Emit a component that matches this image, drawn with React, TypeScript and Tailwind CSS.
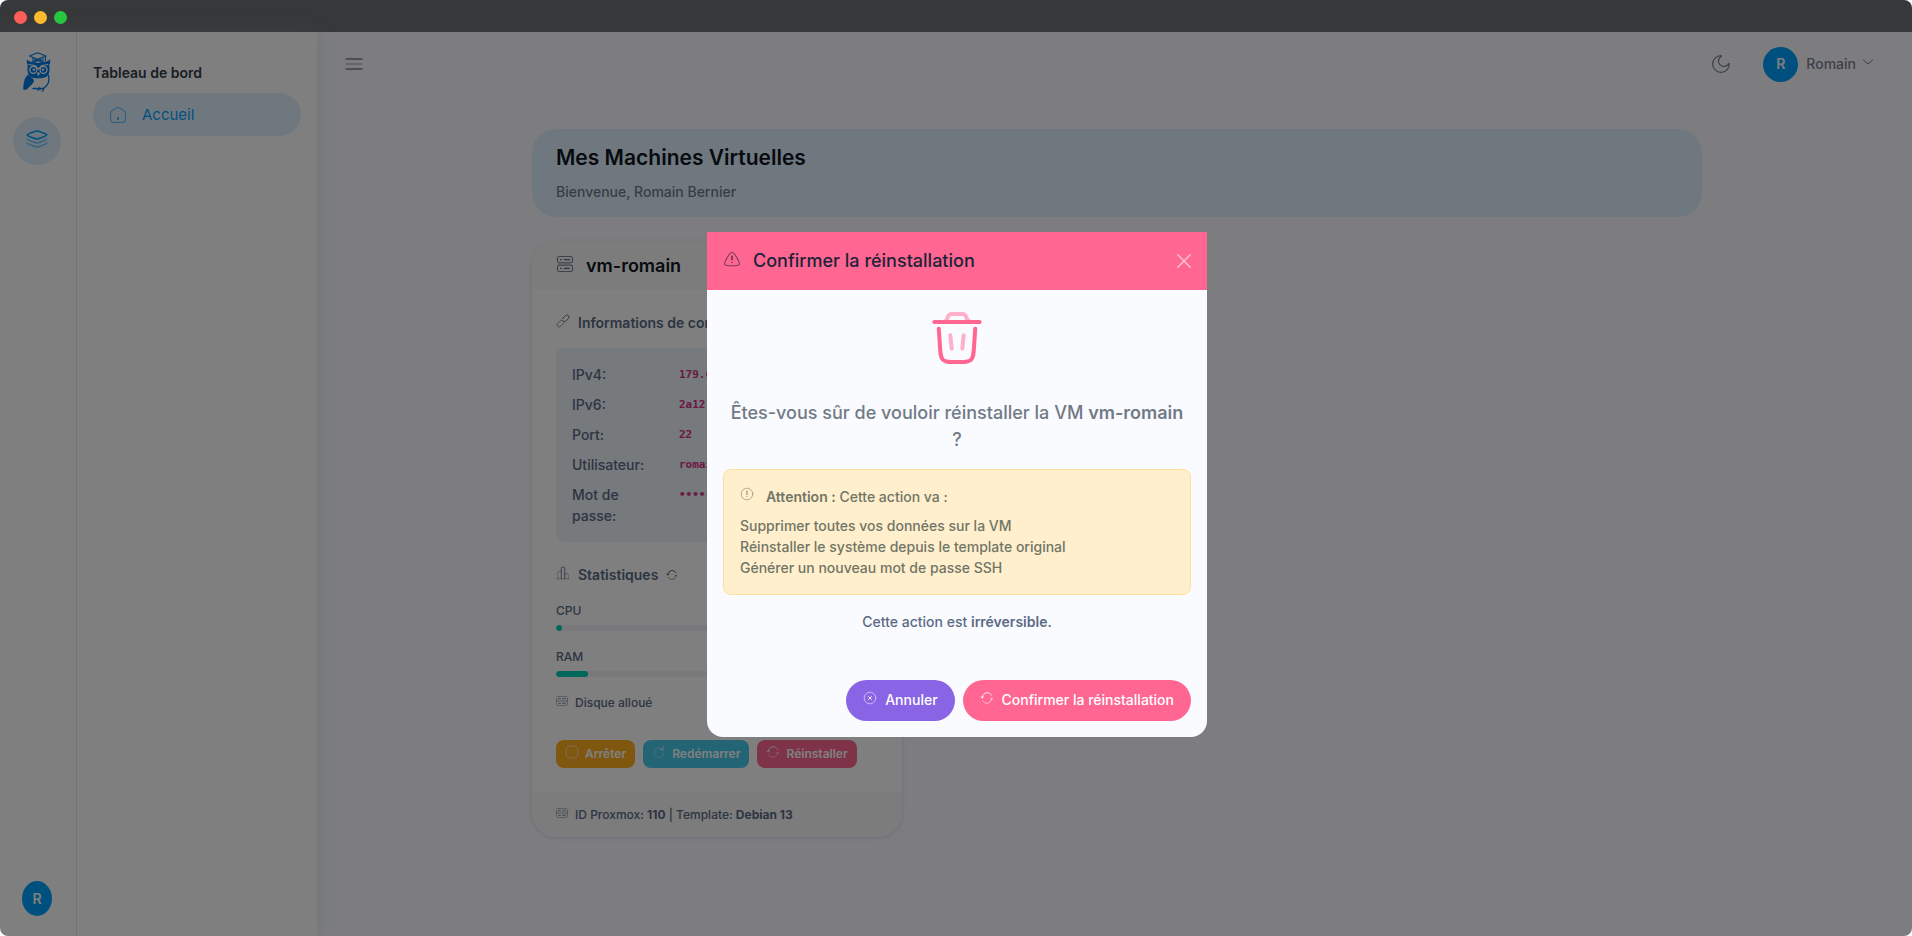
import type { ReactNode } from "react";
import clsx from "clsx";

type IconProps = {
    size?: number;
    className?: string;
    children?: ReactNode;
}

function Icon({ size = 14, className, children }: IconProps) {
    return (
        <svg
            width={size}
            height={size}
            viewBox="0 0 24 24"
            fill="none"
            stroke="currentColor"
            strokeWidth="1.5"
            strokeLinecap="round"
            aria-hidden="true"
            className={clsx("shrink-0", className)}
        >
            {children}
        </svg>
    );
}

function OwlLogo() {
    return (
        <svg width="28" height="40" viewBox="0 0 28 40" fill="#007be4" aria-hidden="true">
            <path d="m6.500 4 8-3.200 8.500 3.200-8.500 3.200Z" fill="none" stroke="#007be4" strokeWidth="1.200" strokeLinejoin="round" />
            <path d="M10 5.500v4.300m10-4.300v4.300m2.500-5.500v5M10 9.500c1.500-1.200 3-1.500 5-1.500s3.500.3 5 1.500M11.500 7l7 3m0-3-7 3" fill="none" stroke="#007be4" strokeWidth="1.100" />
            <path d="M4 7.500c1.500 2 3.500 2.500 6 2.300L15 11l5-1.200c2.500.2 4.700-.3 7-2.300.5 2.500.2 4-.8 5.700 1 5 0 9-2.400 11.200-4 2.600-13 2.600-17.200 0C4.300 21 4 17 4.800 13.200 4 11.500 3.500 9.800 4 7.500Z" />
            <circle cx="10.300" cy="17.800" r="3.500" fill="none" stroke="#fff" strokeWidth="1.300" />
            <circle cx="20.500" cy="17.800" r="3.500" fill="none" stroke="#fff" strokeWidth="1.300" />
            <circle cx="10.800" cy="17.600" r="1.200" fill="#fff" />
            <circle cx="20" cy="17.600" r="1.200" fill="#fff" />
            <path d="m5.500 12.500 6.500 1 3.400 3.500 3.400-3.500 6.500-1" fill="none" stroke="#fff" strokeWidth="1.100" />
            <path d="m13.700 20.500 1.700 4 1.700-4Z" fill="#fff" />
            <path d="M5 22.500c2 3 5.500 3.500 6 6C10.500 32.500 5.500 34.500 4 37.500L.5 38C0 33 1 26 5 22.500Z" />
            <path d="M25.300 23c1.700 6-.8 11-5.300 13.500M10 36.500h4m3.500 0h3M14.500 38l1.500-2.300 1 2.300m2.500 1.200L21 36.500" fill="none" stroke="#007be4" strokeWidth="1.300" strokeLinecap="round" />
        </svg>
    );
}

function ServerIcon({ size = 18, className }: IconProps) {
    return (
        <Icon size={size} className={className}>
            <rect x="2" y="2" width="20" height="8.500" rx="2.500" opacity=".8" />
            <rect x="2" y="13.500" width="20" height="8.500" rx="2.500" opacity=".8" />
            <path d="M6 6.200h1M11 6.200h7M6 17.800h1M11 17.800h7" />
        </Icon>
    );
}

function DiskIcon() {
    return (
        <Icon size={12} className="mb-1">
            <rect x="1" y="3" width="22" height="18" rx="4" opacity=".6" />
            <path d="M1 12h22" opacity=".6" />
            <path d="M5 7.500h4m4 0h6M5 16.500h4m4 0h6" />
        </Icon>
    );
}

function RefreshIcon({ size, className }: IconProps) {
    return (
        <Icon size={size} className={className}>
            <path d="M3.700 11.500C3.800 6.800 7.500 3 12.100 3c3.100 0 5.900 1.700 7.300 4.300" />
            <path d="M1.500 10 3.700 12.200 6 10" />
            <path d="M20.300 12.500c-.1 4.700-3.900 8.500-8.500 8.500-3.100 0-5.900-1.700-7.300-4.300" opacity=".6" />
            <path d="m22.500 14-2.200-2.200L18 14" opacity=".6" />
        </Icon>
    );
}

const connection = [
    { label: "IPv4:", value: "179.60.1.10" },
    { label: "IPv6:", value: "2a12:1::10" },
    { label: "Port:", value: "22" },
    { label: "Utilisateur:", value: "romain" },
    { label: "Mot de passe:", value: "••••••••" },
];

const stats = [
    { label: "CPU", value: 2 },
    { label: "RAM", value: 10 },
];

function TitleBar() {
    return (
        <div className="flex h-8 shrink-0 items-center gap-[7px] bg-[#373839] px-[14px] pt-[2px]">
            <span className="size-[13px] rounded-full bg-[#ff5f57]" />
            <span className="size-[13px] rounded-full bg-[#febc2e]" />
            <span className="size-[13px] rounded-full bg-[#28c840]" />
        </div>
    );
}

function Sidebar() {
    return (
        <aside className="z-10 flex shrink-0 bg-white shadow-[0_0_20px_rgba(90,106,133,0.15)]">
            <div className="flex w-[77px] flex-col items-center border-r border-[#e0e4ea] pt-5 pr-[2px] pb-5">
                <OwlLogo />
                <button type="button" aria-label="Tableau de bord" className="mt-[25px] flex size-12 items-center justify-center rounded-full bg-[#e0f1ff] pb-1 text-[#00a1ff]">
                    <Icon size={24}>
                        <path d="M4.979 9.685C2.993 8.891 2 8.494 2 8s.993-.89 2.979-1.685l2.808-1.123C9.773 4.397 10.767 4 12 4s2.227.397 4.213 1.192l2.808 1.123C21.007 7.109 22 7.506 22 8s-.993.89-2.979 1.685l-2.808 1.124C14.227 11.603 13.233 12 12 12s-2.227-.397-4.213-1.191z" />
                        <path opacity=".5" d="M22 12s-.993.891-2.979 1.685l-2.808 1.124C14.227 15.603 13.233 16 12 16s-2.227-.397-4.213-1.191l-2.808-1.124C2.993 12.891 2 12 2 12" />
                        <path opacity=".5" d="M22 16s-.993.891-2.979 1.685l-2.808 1.124C14.227 19.603 13.233 20 12 20s-2.227-.397-4.213-1.191l-2.808-1.124C2.993 16.891 2 16 2 16" />
                    </Icon>
                </button>
                <span className="mt-auto flex h-[35px] w-[30px] items-center justify-center rounded-[50%] bg-[#00a1ff] text-sm font-semibold text-white">R</span>
            </div>
            <nav className="w-60 px-4 pt-[30px]">
                <h2 className="text-sm leading-[21px] font-semibold text-[#343c48]">Tableau de bord</h2>
                <a href="#" className="mt-[10px] flex h-[43px] items-center gap-[15px] rounded-full bg-[#e0f1ff] px-4 pt-px text-[15px] font-normal text-[#00a1ff]">
                    <Icon size={18}>
                        <path opacity=".6" d="M2 12.204c0-2.289 0-3.433.52-4.381c.518-.949 1.467-1.537 3.364-2.715l2-1.241C9.889 2.622 10.892 2 12 2s2.110.622 4.116 1.867l2 1.241c1.897 1.178 2.846 1.766 3.365 2.715S22 9.915 22 12.203v1.522c0 3.900 0 5.851-1.172 7.063S17.771 22 14 22h-4c-3.771 0-5.657 0-6.828-1.212S2 17.626 2 13.725z" />
                        <path d="M12 15.500v2" strokeWidth="2" />
                    </Icon>
                    Accueil
                </a>
            </nav>
        </aside>
    );
}

function Header() {
    return (
        <header className="flex h-16 items-center pr-9 pl-5 text-[#7a828e]">
            <button type="button" aria-label="Menu">
                <Icon size={24}>
                    <path d="M20 7H4m16 10H4" />
                    <path d="M20 12H4" opacity=".5" />
                </Icon>
            </button>
            <button type="button" aria-label="Mode sombre" className="ml-auto">
                <Icon size={20}>
                    <path strokeLinejoin="round" d="M12 2C6.477 2 2 6.477 2 12s4.477 10 10 10 10-4.477 10-10c0-.463-.694-.540-.933-.143a6.500 6.500 0 1 1-8.924-8.924C12.540 2.693 12.463 2 12 2Z" />
                </Icon>
            </button>
            <button type="button" className="ml-8 flex items-center text-sm">
                <span className="mr-2 flex size-[35px] items-center justify-center rounded-full bg-[#00a1ff] font-semibold text-white">R</span>
                Romain
                <Icon size={16} className="mb-1 ml-1">
                    <path d="m19 9-7 6-7-6" strokeLinejoin="round" />
                </Icon>
            </button>
        </header>
    );
}

function MachineCard() {
    return (
        <section className="mt-6 w-[370px] overflow-hidden rounded-3xl bg-white text-[#5a6a85] shadow-[0_1px_4px_rgba(133,146,173,0.3)]">
            <div className="flex h-[49px] items-center gap-3 bg-[#f8f8f8] px-6">
                <ServerIcon className="mb-1" />
                <h2 className="text-lg font-semibold text-[#10151e]">vm-romain</h2>
            </div>

            <div className="px-6 pt-[22px] pb-6">
                <h3 className="flex items-center gap-2 text-sm leading-[21px] font-semibold">
                    <Icon className="mb-1">
                        <g transform="rotate(-45 12 12)">
                            <path d="M10 15.500H2.500a3.500 3.500 0 0 1 0-7H9a3.500 3.500 0 0 1 3.500 3.500" opacity=".7" />
                            <path d="M14 8.500h7.500a3.500 3.500 0 0 1 0 7H15a3.500 3.500 0 0 1-3.500-3.500" />
                        </g>
                    </Icon>
                    Informations de connexion
                </h3>
                <dl className="mt-[15px] flex flex-col gap-[9px] rounded-lg bg-[#edf4f9] p-4 text-sm leading-[21px]">
                    {connection.map((item) => (
                        <div key={item.label} className="flex">
                            <dt className="w-[107px] pr-6">{item.label}</dt>
                            <dd className="flex h-[21px] items-center">
                                <code className="font-['DejaVu_Sans_Mono',monospace] text-[11px] font-bold text-[#d63384]">{item.value}</code>
                            </dd>
                        </div>
                    ))}
                </dl>

                <h3 className="mt-[22px] flex items-center gap-2 text-sm leading-[21px] font-semibold">
                    <Icon className="mb-1">
                        <path d="M2 22h20" opacity=".5" />
                        <path d="M9 22V4c0-1.400.6-2 2-2h2c1.400 0 2 .6 2 2v18" />
                        <path d="M3 22V11c0-1.400.5-2 2-2h1.500c1.500 0 2.500.6 2.500 2m6 4c0-1.400.6-2 2-2h2c1.400 0 2 .6 2 2v7" opacity=".5" />
                    </Icon>
                    Statistiques
                    <RefreshIcon size={12} className="text-[#29343d]" />
                </h3>
                {stats.map((item) => (
                    <div key={item.label} className="mt-4 text-xs leading-5">
                        {item.label}
                        <div className="mt-1 h-[6px] overflow-hidden rounded-full bg-[#f2f3f7]">
                            <div className="h-full rounded-full bg-[#00ceb6]" style={{ width: `${item.value}%` }} />
                        </div>
                    </div>
                ))}
                <p className="mt-4 flex items-center gap-[7px] text-xs leading-5">
                    <DiskIcon />
                    Disque alloué
                </p>

                <div className="mt-[27px] flex gap-2 text-xs font-semibold text-white">
                    <button type="button" className="flex h-7 items-center gap-[6px] rounded-lg bg-[#ffae1f] px-[9px]">
                        <Icon className="mb-1">
                            <rect x="2" y="2" width="20" height="20" rx="5" opacity=".6" />
                        </Icon>
                        Arrêter
                    </button>
                    <button type="button" className="flex h-7 items-center gap-[6px] rounded-lg bg-[#46caeb] px-[9px]">
                        <Icon className="mb-1">
                            <path d="M20.500 11A8.500 8.500 0 1 1 15 5" opacity=".5" />
                            <path d="M19 3v5h-5" />
                        </Icon>
                        Redémarrer
                    </button>
                    <button type="button" className="flex h-7 items-center gap-[6px] rounded-lg bg-[#ff6692] px-[9px]">
                        <RefreshIcon className="mb-1" />
                        Réinstaller
                    </button>
                </div>
            </div>

            <p className="flex h-[45px] items-center gap-[7px] bg-[#f8f8f8] px-6 text-xs">
                <DiskIcon />
                <span>ID Proxmox: <strong className="font-bold">110</strong> | Template: <strong className="font-bold">Debian 13</strong></span>
            </p>
        </section>
    );
}

function ConfirmModal() {
    return (
        <div className="fixed inset-0 top-8 z-20 flex items-center justify-center rounded-b-lg bg-black/50 pl-0.5">
            <div role="dialog" aria-modal="true" aria-labelledby="confirm-title" className="w-[500px] overflow-hidden rounded-b-2xl bg-[#fafbff] text-sm text-[#5a6a85]">
                <div className="flex h-[58px] items-center bg-[#ff6692] px-4 text-[#1b2338]">
                    <Icon size={18} className="mb-1">
                        <path opacity=".6" d="M5.312 10.762C8.230 5.587 9.689 3 12 3s3.770 2.587 6.688 7.762l.364.644c2.425 4.300 3.638 6.450 2.542 8.022S17.786 21 12.364 21h-.728c-5.422 0-8.134 0-9.230-1.572s.117-3.722 2.542-8.022z" />
                        <path d="M12 8v5M12 16.500v.1" />
                    </Icon>
                    <h2 id="confirm-title" className="ml-3 text-lg font-medium">Confirmer la réinstallation</h2>
                    <button type="button" aria-label="Fermer" className="ml-auto text-white/60">
                        <svg width="14" height="14" viewBox="0 0 14 14" stroke="currentColor" strokeWidth="1.500" strokeLinecap="round" aria-hidden="true">
                            <path d="m.8.8 12.400 12.400m0-12.400L.8 13.200" />
                        </svg>
                    </button>
                </div>

                <div className="px-4 pt-4">
                    <Icon size={64} className="mx-auto text-[#ff6692]">
                        <path d="M20.500 6h-17m15.333 2.500-.460 6.900c-.177 2.654-.265 3.981-1.130 4.790-.865.810-2.195.810-4.856.810h-.774c-2.660 0-3.991 0-4.856-.810-.865-.809-.954-2.136-1.130-4.790l-.460-6.900" />
                        <path opacity=".5" d="m9.500 11 .5 5m4.500-5-.5 5M6.500 6c.056 0 .084 0 .110-.001a1.930 1.930 0 0 0 1.714-1.236l.035-.1.097-.292c.083-.249.125-.373.180-.479a1.500 1.500 0 0 1 1.094-.877C9.849 3 9.980 3 10.242 3h3.516c.262 0 .393 0 .512.015a1.500 1.500 0 0 1 1.094.877c.055.106.097.230.180.479l.097.291A2 2 0 0 0 17.500 6" />
                    </Icon>
                    <p className="mt-[29px] px-1 text-center text-lg leading-[27px] text-[#707a86]">
                        Êtes-vous sûr de vouloir réinstaller la VM <strong className="font-semibold">vm-romain</strong> ?
                    </p>
                    <div role="alert" className="mt-4 rounded-lg border border-[#ffdf9f] bg-[#ffefcc] p-4 leading-[21px] text-[#717567]">
                        <p className="flex items-center">
                            <Icon className="mr-3 mb-1">
                                <circle cx="12" cy="12" r="10" opacity=".6" />
                                <path d="M12 7v6M12 16.500v.1" />
                            </Icon>
                            <span><strong className="font-semibold">Attention :</strong> Cette action va :</span>
                        </p>
                        <ul className="mt-2">
                            <li>Supprimer toutes vos données sur la VM</li>
                            <li>Réinstaller le système depuis le template original</li>
                            <li>Générer un nouveau mot de passe SSH</li>
                        </ul>
                    </div>
                    <p className="mt-4 text-center leading-[21px]">Cette action est <strong className="font-semibold">irréversible</strong>.</p>
                </div>

                <div className="mt-12 flex justify-end gap-2 px-4 pb-4 font-medium text-white">
                    <button type="button" className="flex h-[41px] items-center gap-2 rounded-full bg-[#8965e5] px-[17px]">
                        <Icon className="mb-1">
                            <circle cx="12" cy="12" r="10" opacity=".6" />
                            <path d="m14.500 9.500-5 5m0-5 5 5" />
                        </Icon>
                        Annuler
                    </button>
                    <button type="button" className="flex h-[41px] items-center gap-2 rounded-full bg-[#ff6692] px-[17px]">
                        <RefreshIcon className="mb-1" />
                        Confirmer la réinstallation
                    </button>
                </div>
            </div>
        </div>
    );
}

export default function App() {
    return (
        <div className="flex min-h-screen flex-col overflow-hidden rounded-lg bg-[#fafbff] font-['Inter',sans-serif] font-medium">
            <TitleBar />
            <div className="flex flex-1">
                <Sidebar />
                <div className="min-w-0 flex-1 pl-[5px]">
                    <Header />
                    <main className="mx-auto mt-[33px] max-w-[1170px]">
                        <div className="rounded-3xl bg-[#e0f1ff] px-6 pt-[13px] pb-[15px]">
                            <h1 className="text-[21px] leading-[31px] font-semibold text-[#10151e]">Mes Machines Virtuelles</h1>
                            <p className="mt-2 text-sm leading-[21px] text-[#707a86]">Bienvenue, Romain Bernier</p>
                        </div>
                        <MachineCard />
                    </main>
                </div>
            </div>
            <ConfirmModal />
        </div>
    );
}
